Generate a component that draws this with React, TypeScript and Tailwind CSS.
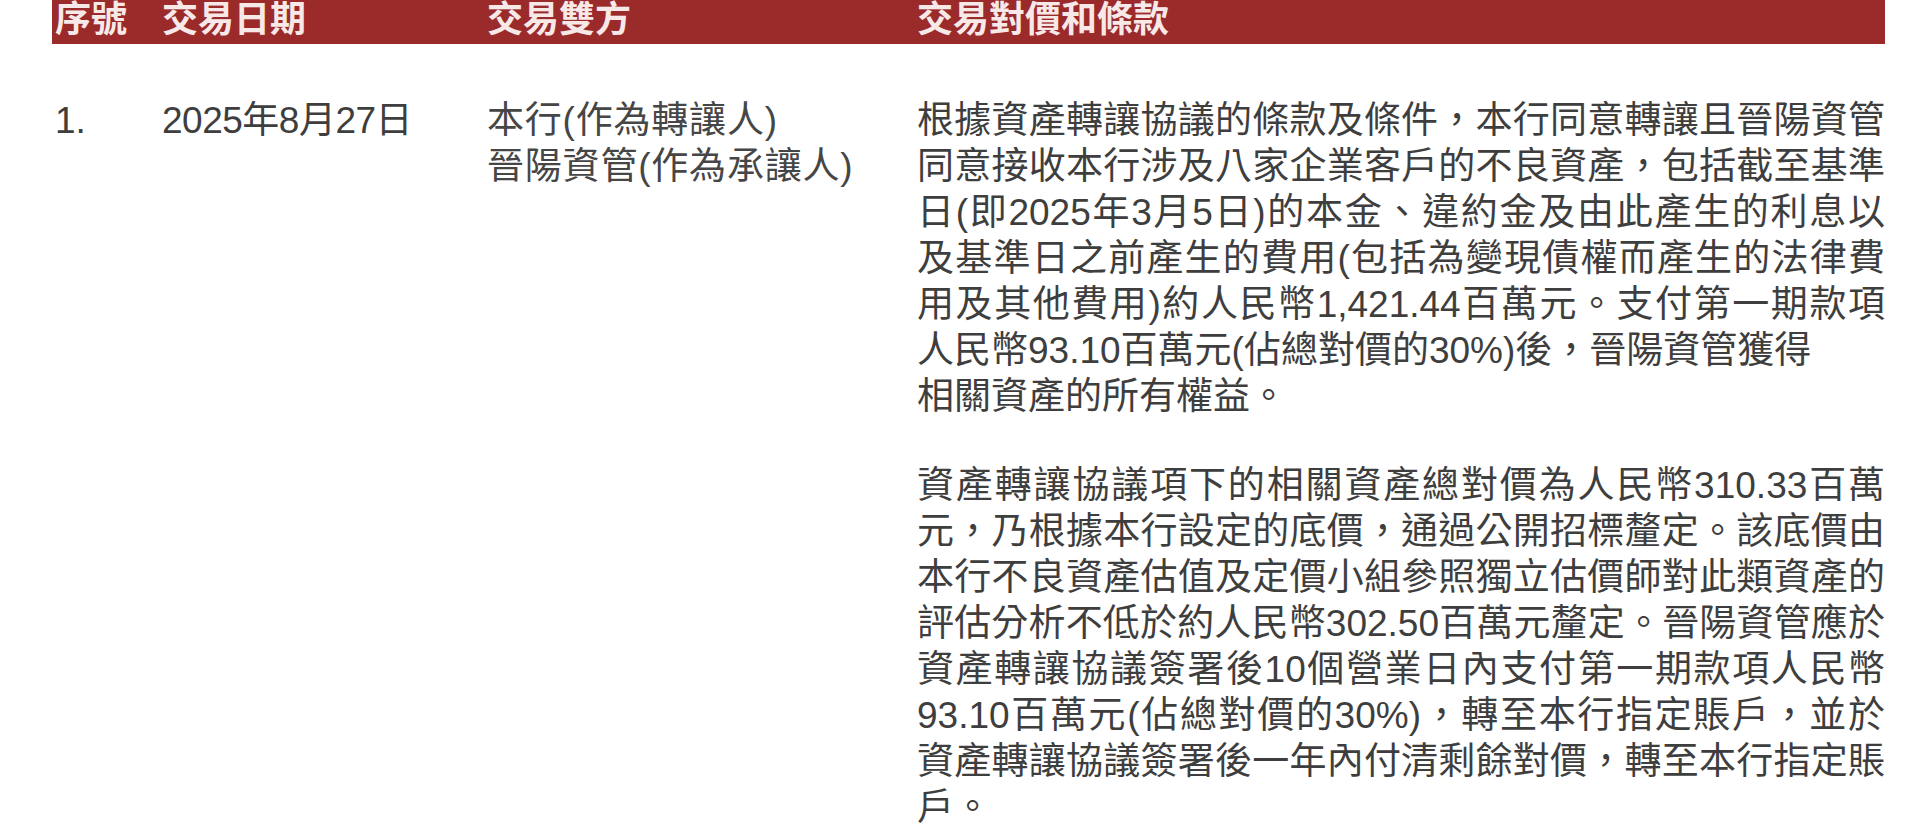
import React from 'react';

const font = { fontFamily: '"Liberation Sans", "Noto Sans CJK TC", sans-serif' };

interface Line {
    text: string;
    /** Full lines are spread to the column edge, as in the printed table. */
    full?: boolean;
}

const termsParagraphs: Line[][] = [
    [
        { text: '根據資產轉讓協議的條款及條件，本行同意轉讓且晉陽資管', full: true },
        { text: '同意接收本行涉及八家企業客戶的不良資產，包括截至基準', full: true },
        { text: '日(即2025年3月5日)的本金、違約金及由此產生的利息以', full: true },
        { text: '及基準日之前產生的費用(包括為變現債權而產生的法律費', full: true },
        { text: '用及其他費用)約人民幣1,421.44百萬元。支付第一期款項', full: true },
        { text: '人民幣93.10百萬元(佔總對價的30%)後，晉陽資管獲得' },
        { text: '相關資產的所有權益。' },
    ],
    [
        { text: '資產轉讓協議項下的相關資產總對價為人民幣310.33百萬', full: true },
        { text: '元，乃根據本行設定的底價，通過公開招標釐定。該底價由', full: true },
        { text: '本行不良資產估值及定價小組參照獨立估價師對此類資產的', full: true },
        { text: '評估分析不低於約人民幣302.50百萬元釐定。晉陽資管應於', full: true },
        { text: '資產轉讓協議簽署後10個營業日內支付第一期款項人民幣', full: true },
        { text: '93.10百萬元(佔總對價的30%)，轉至本行指定賬戶，並於', full: true },
        { text: '資產轉讓協議簽署後一年內付清剩餘對價，轉至本行指定賬', full: true },
        { text: '戶。' },
    ],
];

const headers = ['序號', '交易日期', '交易雙方', '交易對價和條款'];

export default function App() {
    return (
        <div className="min-h-[832px] w-[1920px] bg-white pl-[52px] pr-[35px]" style={font}>
            {/* Header bar */}
            <div className="grid h-[44px] grid-cols-[107px_325px_430px_1fr] bg-[#9b2a2b] pl-[3px]">
                {headers.map((h) => (
                    <div key={h} className="-mt-[2px] text-[36px] leading-[44px] font-bold text-[#f7e9e8]">
                        {h}
                    </div>
                ))}
            </div>

            {/* Row 1 */}
            <div className="mt-[54px] grid grid-cols-[107px_325px_430px_1fr] pl-[3px] text-[37px] leading-[46px] text-[#3e3e3e]">
                <div>1.</div>
                <div className="tracking-[-0.5px]">2025年8月27日</div>
                <div className="tracking-[0.8px] text-[#464646]">
                    <div>本行(作為轉讓人)</div>
                    <div>晉陽資管(作為承讓人)</div>
                </div>
                <div className="flex flex-col gap-[43px]">
                    {termsParagraphs.map((para, i) => (
                        <p key={i}>
                            {para.map((line, j) => (
                                <span
                                    key={j}
                                    className={
                                        line.full
                                            ? 'block text-justify [text-align-last:justify]'
                                            : 'block'
                                    }
                                >
                                    {line.text}
                                </span>
                            ))}
                        </p>
                    ))}
                </div>
            </div>
        </div>
    );
}
